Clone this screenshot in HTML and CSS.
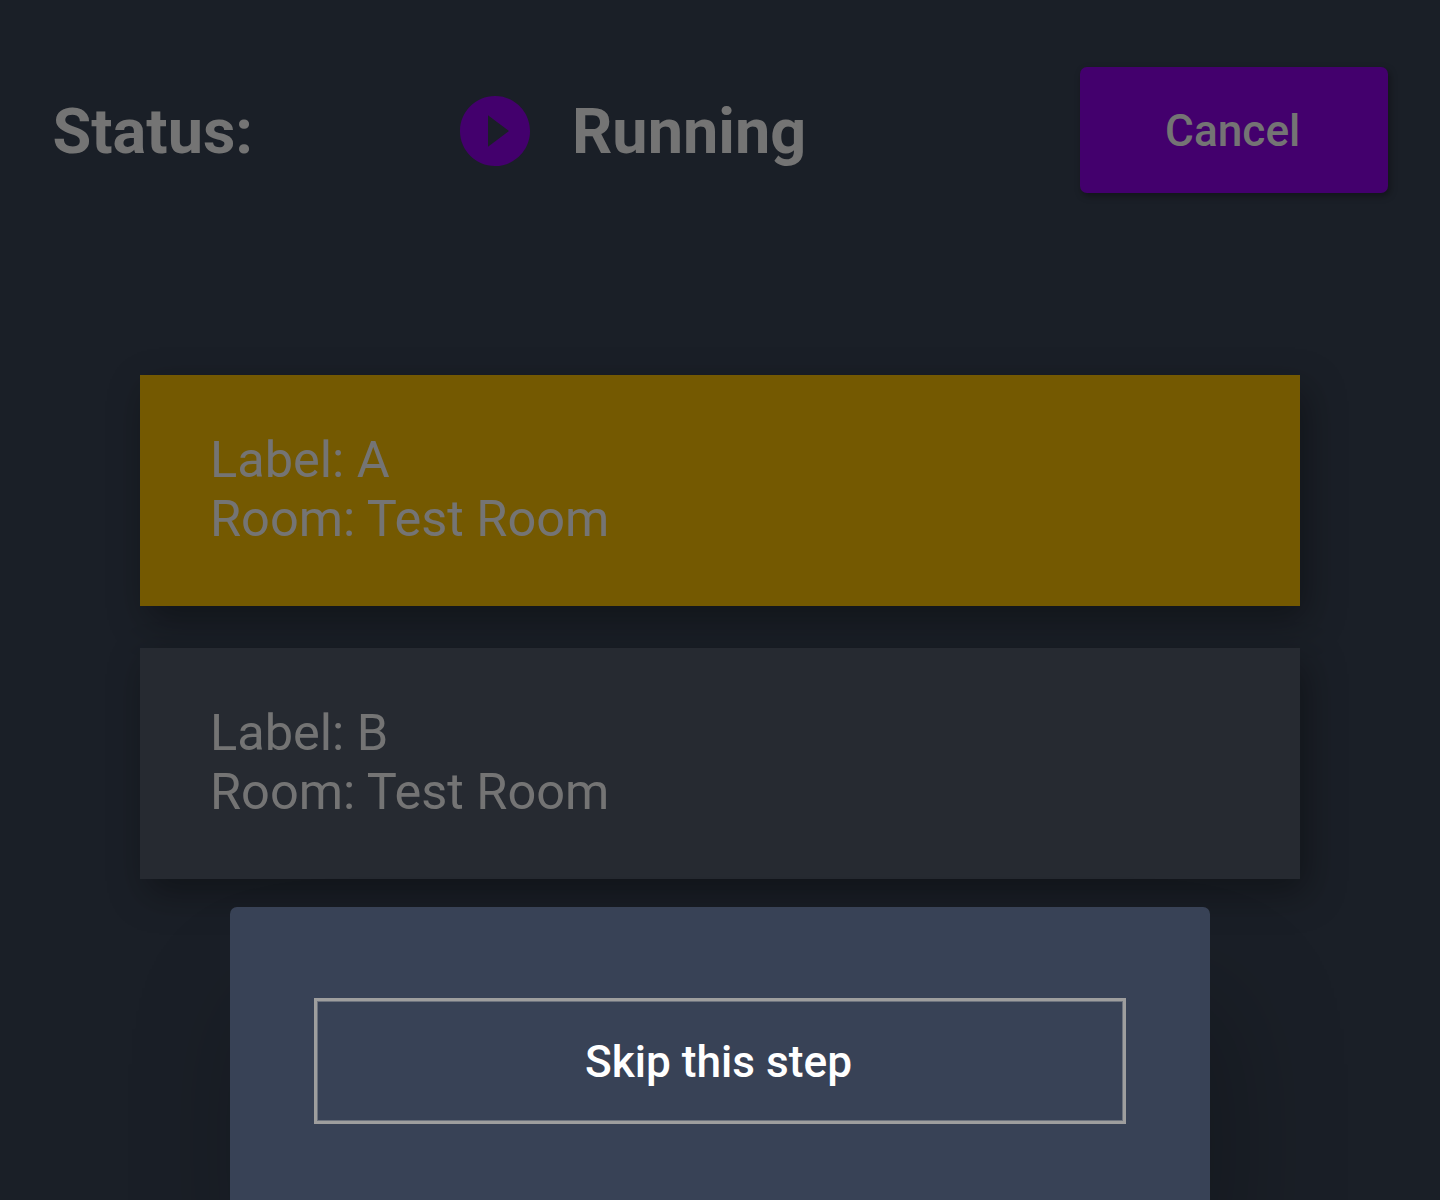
FILE: index.html
```html
<!DOCTYPE html>
<html lang="en">
<head>
<meta charset="utf-8">
<title>Status</title>
<link rel="stylesheet" href="styles.css">
</head>
<body>
<main class="page">
  <header class="toolbar">
    <h1 class="label">Status:</h1>
    <div class="state">
      <svg class="icon" viewBox="2 2 20 20" aria-hidden="true"><path d="M12 2C6.480 2 2 6.480 2 12s4.480 10 10 10 10-4.480 10-10S17.520 2 12 2zm-2 14.500v-9l6 4.500-6 4.500z"/></svg>
      <h1>Running</h1>
    </div>
    <button class="cancel">Cancel</button>
  </header>
  <section class="steps">
    <article class="card active"><p>Label: A</p><p>Room: Test Room</p></article>
    <article class="card"><p>Label: B</p><p>Room: Test Room</p></article>
  </section>
</main>
<div class="backdrop">
  <div class="dialog" role="dialog"><button class="skip">Skip this step</button></div>
</div>
</body>
</html>
```
FILE: styles.css
```css
* { box-sizing: border-box; margin: 0; }
body {
  height: 1200px;
  overflow: hidden;
  background: #303947;
  color: #d3d3d3;
  font-family: Roboto, sans-serif;
}
.page { padding: 67px 52.5px 0; }
.toolbar {
  display: grid;
  grid-template-columns: 407.5px 1fr 307.5px;
  align-items: center;
  height: 126px;
}
h1 { padding-top: 3px; font-size: 63px; line-height: 74px; font-weight: 700; }
.state { display: flex; align-items: center; gap: 42px; }
.icon { width: 70px; height: 70px; margin-top: 2px; fill: #7b00c6; }
button { padding: 2px 0 0; font: 500 44.2px/54px Roboto, sans-serif; }
.cancel {
  height: 126px;
  padding-right: 2px;
  border: 0;
  border-radius: 7px;
  background: #7b00c6;
  color: #d3d3d3;
  box-shadow: 2px 3px 7px rgba(0, 0, 0, .35);
}
.steps {
  display: grid;
  gap: 42px;
  margin: 182px 87.5px 0;
}
.card {
  height: 231px;
  padding: 54.5px 70px;
  background: #454d5a;
  font-size: 50.5px;
  line-height: 59px;
  box-shadow: 7px 14px 35px rgba(0, 0, 0, .35);
}
.active { background: #d4a302; }
.backdrop {
  position: absolute;
  inset: 0;
  padding-top: 907px;
  overflow: hidden;
  background: rgba(0, 0, 0, .45);
}
.dialog {
  width: 980px;
  height: 293px;
  margin: 0 auto;
  padding: 91px 84px 0;
  border-radius: 7px 7px 0 0;
  background: #384256;
  box-shadow: 18px 90px 120px rgba(0, 0, 0, .22);
}
.skip {
  width: 100%;
  height: 126px;
  padding-right: 3px;
  border: 3px solid #9e9e9e;
  background: transparent;
  color: #fff;
  box-shadow: inset 0 0 0 1px #6d737e;
}
```
